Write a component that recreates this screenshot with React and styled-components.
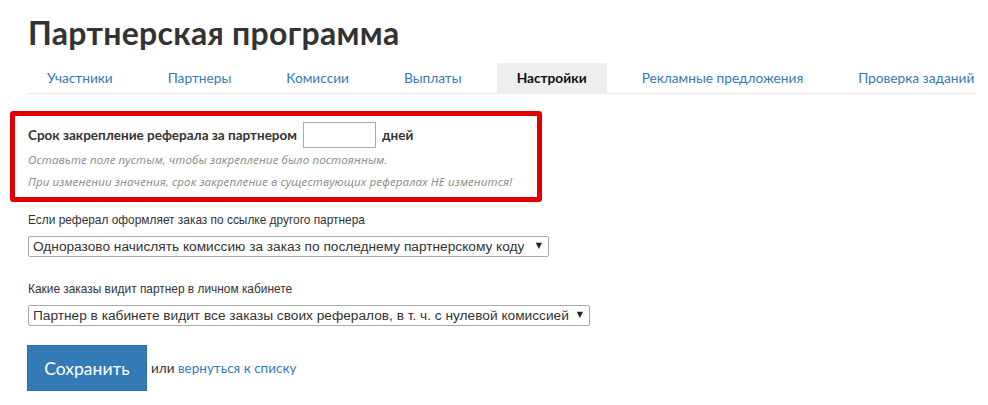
import React, { useState } from 'react';
import styled, { createGlobalStyle } from 'styled-components';

const GlobalStyle = createGlobalStyle`
    body {
        margin: 0;
        background: #fff;
        font-family: Lato, "Open Sans", sans-serif;
        color: #333;
    }
`;

const Page = styled.div`
    padding: 13px 12px 0 28px;
`;

const Title = styled.h1`
    margin: 0 0 10px;
    font-size: 32px;
    line-height: 40px;
    font-weight: 700;
    color: #333;
    letter-spacing: 0.3px;
`;

const Tabs = styled.ul`
    display: flex;
    list-style: none;
    margin: 0 0 17px -1px;
    padding: 0;
    border-bottom: 1px solid #eee;
`;

const Tab = styled.li`
    margin-right: 15px;
    padding: 0 20px;
    height: 30px;
    line-height: 30px;
    font-size: 13.7px;
    white-space: nowrap;
    cursor: pointer;
    color: ${p => (p.active ? '#111' : '#337ab7')};
    font-weight: ${p => (p.active ? 700 : 400)};
    background: ${p => (p.active ? '#eee' : 'transparent')};
    &:last-child {
        margin-right: 0;
    }
`;

const Highlight = styled.div`
    width: 496px;
    margin-left: -18px;
    border: 5px solid #e10000;
    border-radius: 3px;
    padding: 6px 13px 7px;
`;

const TermRow = styled.div`
    display: flex;
    align-items: center;
    gap: 6px;
    font-weight: 700;
    font-size: 13.5px;
    color: #333;
`;

const DaysInput = styled.input`
    width: 73px;
    height: 26px;
    box-sizing: border-box;
    border: 1px solid #aaa;
    padding: 2px 4px;
    font: inherit;
`;

const Note = styled.p`
    margin: ${p => (p.first ? '4px 0 0' : '6px 0 0')};
    font-family: "Open Sans", Lato, sans-serif;
    font-size: 11.5px;
    letter-spacing: 0.12px;
    line-height: 16px;
    font-style: italic;
    white-space: nowrap;
    color: #888;
`;

const Field = styled.div`
    margin-top: ${p => p.top}px;
`;

const Label = styled.div`
    font-family: "Liberation Sans", Arial, sans-serif;
    font-size: 11.9px;
    line-height: 16px;
    color: #333;
    margin-bottom: 8px;
`;

const SelectWrap = styled.div`
    position: relative;
    display: inline-block;
    vertical-align: top;
`;

const Select = styled.select`
    appearance: none;
    -webkit-appearance: none;
    display: block;
    height: 21px;
    box-sizing: border-box;
    border: 1px solid #a9a9a9;
    border-radius: 2px;
    background: #fff;
    padding: 0 14px 0 4px;
    font-family: "Liberation Sans", Arial, sans-serif;
    font-size: 13.7px;
    color: #333;
    width: ${p => p.w}px;
`;

const Arrow = styled.span`
    position: absolute;
    right: 7px;
    top: 5px;
    font-size: 8px;
    line-height: 10px;
    color: #222;
    pointer-events: none;
    font-family: "DejaVu Sans", sans-serif;
`;

const Actions = styled.div`
    display: flex;
    align-items: center;
    gap: 4px;
    margin-top: 19px;
    margin-left: -1px;
    font-size: 13.5px;
    color: #333;
`;

const SaveButton = styled.button`
    width: 120px;
    height: 46px;
    border: 1px solid #2e6da4;
    background: #337ab7;
    color: #fff;
    font-family: Lato, "Open Sans", sans-serif;
    font-size: 17.5px;
    cursor: pointer;
    padding: 0;
`;

const BackLink = styled.a`
    color: #337ab7;
    text-decoration: none;
`;

const tabs = [
    'Участники',
    'Партнеры',
    'Комиссии',
    'Выплаты',
    'Настройки',
    'Рекламные предложения',
    'Проверка заданий',
];

const App = () => {
    const [active, setActive] = useState('Настройки');
    const [days, setDays] = useState('');

    return (
        <Page>
            <GlobalStyle />
            <Title>Партнерская программа</Title>
            <Tabs>
                {tabs.map(t => (
                    <Tab key={t} active={t === active} onClick={() => setActive(t)}>{t}</Tab>
                ))}
            </Tabs>

            <Highlight>
                <TermRow>
                    <span>Срок закрепление реферала за партнером</span>
                    <DaysInput value={days} onChange={e => setDays(e.target.value)} />
                    <span>дней</span>
                </TermRow>
                <Note first>Оставьте поле пустым, чтобы закрепление было постоянным.</Note>
                <Note>При изменении значения, срок закрепление в существующих рефералах НЕ изменится!</Note>
            </Highlight>

            <Field top={10}>
                <Label>Если реферал оформляет заказ по ссылке другого партнера</Label>
                <SelectWrap>
                    <Select w={521}>
                        <option>Одноразово начислять комиссию за заказ по последнему партнерскому коду</option>
                    </Select>
                    <Arrow>▼</Arrow>
                </SelectWrap>
            </Field>

            <Field top={24}>
                <Label>Какие заказы видит партнер в личном кабинете</Label>
                <SelectWrap>
                    <Select w={562}>
                        <option>Партнер в кабинете видит все заказы своих рефералов, в т. ч. с нулевой комиссией</option>
                    </Select>
                    <Arrow>▼</Arrow>
                </SelectWrap>
            </Field>

            <Actions>
                <SaveButton>Сохранить</SaveButton>
                <span>или <BackLink href="#">вернуться к списку</BackLink></span>
            </Actions>
        </Page>
    );
};

export default App;
